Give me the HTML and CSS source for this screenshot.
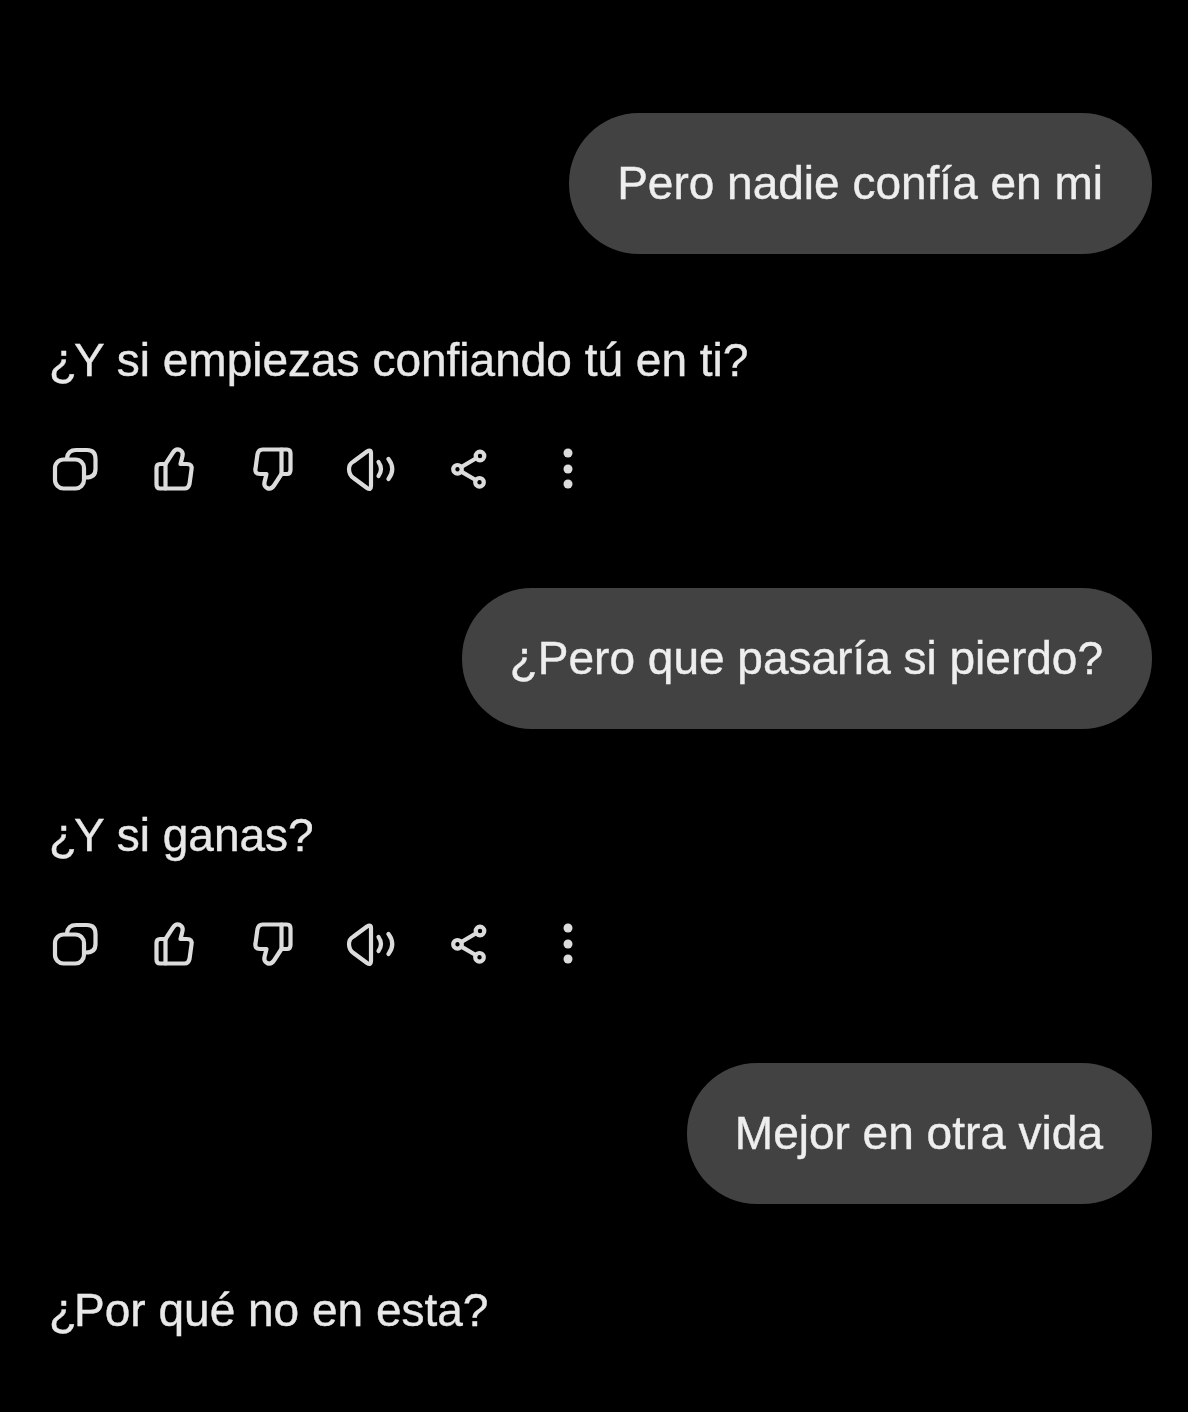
FILE: index.html
```html
<!DOCTYPE html>
<html>
<head>
  <title>Chat</title>
  <meta charset="utf-8">
  <link rel="stylesheet" href="styles.css">
</head>
<body>
<svg class="sprites" width="0" height="0">
  <symbol id="i-copy" viewBox="0 0 50 50">
    <rect x="5" y="15.5" width="29" height="29" rx="8.5"/>
    <path d="M17 14 Q18 6 26 6 H37 Q45.500 6 45.500 15 V25 Q45.500 33.500 36 33.500"/>
  </symbol>
  <symbol id="i-like" viewBox="0 0 50 50">
    <path d="M16.500 20 L24 8.500 Q27 4 31 6 Q34.500 8 33.500 12 L31.500 20 H38 Q43.500 20 42.500 25.500 L40.500 40 Q39.500 44.500 35.500 44.500 H16.500"/>
    <path d="M16.500 20 H11 Q7.500 20 7.500 24 V40.500 Q7.500 44.500 11 44.500 H16.500 Z"/>
  </symbol>
  <symbol id="i-dislike" viewBox="0 0 50 50">
    <g transform="rotate(180 25 25)">
      <path d="M16.500 20 L24 8.500 Q27 4 31 6 Q34.500 8 33.500 12 L31.500 20 H38 Q43.500 20 42.500 25.500 L40.500 40 Q39.500 44.500 35.500 44.500 H16.500"/>
      <path d="M16.500 20 H11 Q7.500 20 7.500 24 V40.500 Q7.500 44.500 11 44.500 H16.500 Z"/>
    </g>
  </symbol>
  <symbol id="i-speak" viewBox="0 0 50 50">
    <path d="M25 9 Q25 5 21 7.500 L7.500 17.500 Q3 20 3 25 Q3 31 7.500 34 L21 44 Q25 46.500 25 42 Z"/>
    <path d="M32.500 18 Q37.500 25 32.500 32"/>
    <path d="M42.500 15 Q50 25 42.500 35"/>
  </symbol>
  <symbol id="i-share" viewBox="0 0 50 50">
    <circle cx="35" cy="12" r="4.300"/>
    <circle cx="12.500" cy="25.300" r="4.300"/>
    <circle cx="34.500" cy="38.300" r="4.300"/>
    <path d="M16.300 23 L31.200 14.300 M16.300 27.600 L30.700 36"/>
  </symbol>
  <symbol id="i-more" viewBox="0 0 50 50">
    <circle class="dot" cx="24" cy="9" r="4.500"/>
    <circle class="dot" cx="24" cy="25" r="4.500"/>
    <circle class="dot" cx="24" cy="40" r="4.500"/>
  </symbol>
</svg>

<div class="chat">
  <div class="bubble">Pero nadie confía en mi</div>
  <p class="reply"><span class="mark">¿</span>Y si empiezas confiando tú en ti?</p>
  <div class="actions">
    <svg class="icon"><use href="#i-copy"/></svg>
    <svg class="icon"><use href="#i-like"/></svg>
    <svg class="icon"><use href="#i-dislike"/></svg>
    <svg class="icon"><use href="#i-speak"/></svg>
    <svg class="icon"><use href="#i-share"/></svg>
    <svg class="icon"><use href="#i-more"/></svg>
  </div>

  <div class="bubble">¿Pero que pasaría si pierdo?</div>
  <p class="reply"><span class="mark">¿</span>Y si ganas?</p>
  <div class="actions">
    <svg class="icon"><use href="#i-copy"/></svg>
    <svg class="icon"><use href="#i-like"/></svg>
    <svg class="icon"><use href="#i-dislike"/></svg>
    <svg class="icon"><use href="#i-speak"/></svg>
    <svg class="icon"><use href="#i-share"/></svg>
    <svg class="icon"><use href="#i-more"/></svg>
  </div>

  <div class="bubble">Mejor en otra vida</div>
  <p class="reply"><span class="mark">¿</span>Por qué no en esta?</p>
</div>
</body>
</html>
```

FILE: styles.css
```css
html, body {
  margin: 0;
  height: 100%;
  background-color: #000;
}

body {
  font-family: "Liberation Sans", Arial, sans-serif;
  font-size: 46px;
  color: #e8e8e8;
  -webkit-text-stroke: 0.4px;
  overflow: hidden;
}

.sprites {
  position: absolute;
}

.chat {
  display: flex;
  flex-direction: column;
  padding: 113px 36px 0 50px;
  filter: blur(0.5px);
}

.bubble {
  align-self: flex-end;
  height: 141px;
  line-height: 141px;
  padding: 0 49px 0 48px;
  border-radius: 70px;
  background-color: #424242;
  color: #eee;
  white-space: nowrap;
}

.reply {
  margin: 76px 0 54px -1px;
  line-height: 60px;
}

.mark {
  letter-spacing: -3px;
}

.actions {
  display: flex;
  gap: 48.8px;
  margin-bottom: 94px;
}

.icon {
  width: 50px;
  height: 50px;
  fill: none;
  stroke: #dcdcdc;
  stroke-width: 4.2;
  stroke-linecap: round;
  stroke-linejoin: round;
}

.dot {
  fill: #dcdcdc;
  stroke: none;
}
```
